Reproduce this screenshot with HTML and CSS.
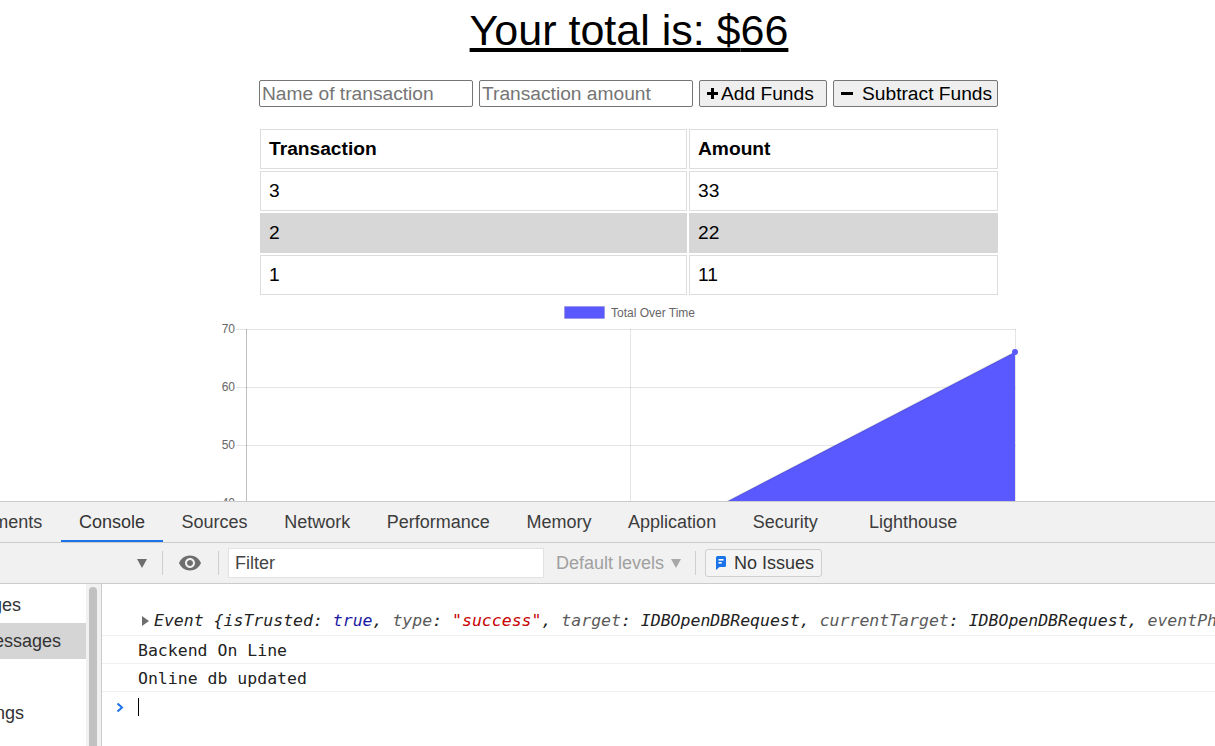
FILE: index.html
```html
<!DOCTYPE html>
<html lang="en">
<head>
<meta charset="utf-8">
<title>Budget Tracker</title>
<link rel="stylesheet" href="styles.css">
</head>
<body>
<div class="app">
  <main class="page">
    <h1 class="total">Your total is: $<span class="amount">66</span></h1>
    <form class="form">
      <input class="field" type="text" placeholder="Name of transaction">
      <input class="field" type="text" placeholder="Transaction amount">
      <button type="button" class="btn btn-add"><svg class="ico-plus" viewBox="0 0 11 11" width="11" height="11"><rect x="4" y="0" width="3" height="11"/><rect x="0" y="4" width="11" height="3"/></svg>Add Funds</button>
      <button type="button" class="btn btn-sub"><svg class="ico-minus" viewBox="0 0 12 3" width="12" height="3"><rect x="0" y="0" width="12" height="3"/></svg>Subtract Funds</button>
    </form>
    <table class="tx">
      <thead>
        <tr><th>Transaction</th><th>Amount</th></tr>
      </thead>
      <tbody>
        <tr><td>3</td><td>33</td></tr>
        <tr class="alt"><td>2</td><td>22</td></tr>
        <tr><td>1</td><td>11</td></tr>
      </tbody>
    </table>
    <svg class="chart" width="1215" height="204" viewBox="0 297 1215 204">
      <g stroke="rgba(0,0,0,0.1)" stroke-width="1">
        <line x1="236" y1="329.5" x2="1016" y2="329.5"/>
        <line x1="236" y1="387.5" x2="1016" y2="387.5"/>
        <line x1="236" y1="445.5" x2="1016" y2="445.5"/>
        <line x1="236" y1="503.5" x2="1016" y2="503.5"/>
        <line x1="630.5" y1="329" x2="630.5" y2="510"/>
        <line x1="1015.5" y1="329" x2="1015.5" y2="510"/>
      </g>
      <line x1="246.5" y1="329" x2="246.5" y2="510" stroke="rgba(0,0,0,0.25)" stroke-width="1"/>
      <polygon points="710.7,510 1015,352 1015,510" fill="#5959ff"/>
      <line x1="710.7" y1="510" x2="1015" y2="352" stroke="rgba(0,0,0,0.12)" stroke-width="1.5"/>
      <circle cx="1015" cy="352" r="3" fill="#5959ff"/>
      <rect x="564.5" y="306.5" width="40" height="12" fill="#5959ff" stroke="rgba(0,0,0,0.1)"/>
      <text class="chart-label" x="611" y="317">Total Over Time</text>
      <text class="chart-label" x="235" y="333" text-anchor="end">70</text>
      <text class="chart-label" x="235" y="391" text-anchor="end">60</text>
      <text class="chart-label" x="235" y="449" text-anchor="end">50</text>
      <text class="chart-label" x="235" y="507" text-anchor="end">40</text>
    </svg>
  </main>

  <section class="devtools">
    <nav class="tabbar">
      <div class="tabs">
        <span class="tab">Elements</span>
        <span class="tab active">Console</span>
        <span class="tab">Sources</span>
        <span class="tab">Network</span>
        <span class="tab">Performance</span>
        <span class="tab">Memory</span>
        <span class="tab">Application</span>
        <span class="tab">Security</span>
        <span class="tab tab-lh">Lighthouse</span>
      </div>
    </nav>
    <div class="toolbar">
      <svg class="ctx-arrow" viewBox="0 0 10 9" width="10" height="9"><polygon points="0,0 10,0 5,9"/></svg>
      <span class="sep sep-1"></span>
      <svg class="eye" viewBox="0 0 24 24" width="24" height="24"><path d="M12 4.5C7 4.5 2.730 7.61 1 12c1.73 4.39 6 7.5 11 7.5s9.27-3.11 11-7.5c-1.73-4.39-6-7.5-11-7.5zM12 17c-2.76 0-5-2.24-5-5s2.24-5 5-5 5 2.24 5 5-2.24 5-5 5zm0-8c-1.66 0-3 1.34-3 3s1.34 3 3 3 3-1.34 3-3-1.34-3-3-3z"/></svg>
      <span class="sep sep-2"></span>
      <div class="filter">Filter</div>
      <span class="levels">Default levels<svg class="lv-arrow" viewBox="0 0 10 9" width="10" height="9"><polygon points="0,0 10,0 5,9"/></svg></span>
      <span class="sep sep-3"></span>
      <span class="issues"><svg class="issue-ico" viewBox="0 0 10 14" width="10" height="14"><path d="M1.5 0h7A1.5 1.5 0 0 1 10 1.5v8A1.5 1.5 0 0 1 8.5 11H3.5L0 14V1.5A1.5 1.5 0 0 1 1.5 0z" fill="#1a73e8"/><rect x="2.5" y="3" width="5" height="1.6" fill="#fff"/><rect x="2.5" y="6" width="3.2" height="1.6" fill="#fff"/></svg>No Issues</span>
    </div>
    <div class="console">
      <ul class="sidebar">
        <li>3 messages</li>
        <li class="sel">3 user messages</li>
        <li>No errors</li>
        <li>No warnings</li>
        <li>No info</li>
      </ul>
      <div class="scroll"><span class="thumb"></span></div>
      <div class="messages">
        <div class="msg msg-event"><svg class="disclosure" viewBox="0 0 7 10" width="7" height="10"><polygon points="0,0 7,5 0,10"/></svg>Event {isTrusted: <span class="bool">true</span>, <span class="key">type</span>: <span class="str">"success"</span>, <span class="key">target</span>: IDBOpenDBRequest, <span class="key">currentTarget</span>: IDBOpenDBRequest, <span class="key">eventPhase</span>: 2, …}</div>
        <div class="msg">Backend On Line</div>
        <div class="msg">Online db updated</div>
        <div class="prompt"><svg class="chevron" viewBox="0 0 8 11" width="8" height="11"><polyline points="1.5,1.5 6,5.5 1.5,9.5"/></svg><span class="caret"></span></div>
      </div>
    </div>
  </section>
</div>
</body>
</html>
```

FILE: styles.css
```css
* { box-sizing: border-box; }

html, body {
  margin: 0;
  height: 100%;
}

body {
  overflow: hidden;
  background: #fff;
  color: #000;
  font-family: "Liberation Sans", Arial, sans-serif;
}

.app {
  display: flex;
  flex-direction: column;
  height: 746px;
}

/* ---------- page ---------- */
.page {
  flex: none;
  height: 501px;
  overflow: hidden;
  padding-left: 43px;
}

.total {
  margin: 0;
  padding-top: 5px;
  font-size: 43px;
  line-height: 50px;
  font-weight: normal;
  text-align: center;
  text-decoration: underline;
}

.form {
  display: flex;
  justify-content: center;
  gap: 6px;
  margin: 25px 0 0 -1px;
}

.field {
  width: 214px;
  height: 27px;
  margin: 0;
  padding: 1px 2px;
  border: 1px solid #767676;
  border-radius: 2px;
  background: #fff;
  color: #000;
  font: 19.2px "Liberation Sans", Arial, sans-serif;
}

.field::placeholder { color: #757575; }

.btn {
  height: 27px;
  margin: 0;
  padding: 0 0 0 7px;
  display: flex;
  align-items: center;
  border: 1px solid #767676;
  border-radius: 2px;
  background: #efefef;
  color: #000;
  font: 19.2px "Liberation Sans", Arial, sans-serif;
  white-space: nowrap;
}

.btn-add { width: 128px; }
.btn-sub { width: 165px; }

.ico-plus { margin-right: 3px; fill: #000; flex: none; }
.ico-minus { margin-right: 9px; fill: #000; flex: none; }

.tx {
  width: 742px;
  margin: 20px auto 0;
  border-spacing: 2px;
  table-layout: fixed;
  font-size: 19.2px;
}

.tx th,
.tx td {
  border: 1px solid #ddd;
  padding: 8px;
  line-height: 22px;
  text-align: left;
}

.tx th:first-child { width: 427px; }
.tx th { font-weight: bold; }

.tx .alt td {
  background: #d7d7d7;
  border-color: #d7d7d7;
}

.chart {
  display: block;
  margin-left: -43px;
}

.chart-label {
  font-family: "Liberation Sans", Arial, sans-serif;
  font-size: 12px;
  fill: #666;
}

/* ---------- devtools ---------- */
.devtools {
  flex: 1;
  min-height: 0;
  display: flex;
  flex-direction: column;
  border-top: 1px solid #cbcbcb;
  background: #fff;
  color: #333;
  font-family: "Liberation Sans", Arial, sans-serif;
  font-size: 18px;
}

.tabbar {
  flex: none;
  height: 41px;
  background: #f1f1f1;
  border-bottom: 1px solid #cbcbcb;
  overflow: hidden;
}

.tabs {
  display: flex;
  height: 40px;
  margin-left: -51px;
}

.tab {
  padding: 0 18.3px;
  line-height: 40px;
  white-space: nowrap;
  color: #3c3c3c;
}

.tab.active {
  color: #333;
  box-shadow: inset 0 -2px 0 #1a73e8;
}

.tab-lh { padding-left: 33px; }

.toolbar {
  flex: none;
  height: 41px;
  display: flex;
  align-items: center;
  background: #f1f1f1;
  border-bottom: 1px solid #cbcbcb;
}

.ctx-arrow {
  margin-left: 137px;
  fill: #6e6e6e;
  flex: none;
}

.sep {
  flex: none;
  width: 1px;
  height: 24px;
  background: #cfcfcf;
}

.sep-1 { margin-left: 15px; }
.sep-2 { margin-left: 16px; }
.sep-3 { margin-left: 14px; }

.eye {
  margin-left: 15px;
  fill: #6e6e6e;
  flex: none;
}

.filter {
  flex: none;
  margin-left: 9px;
  width: 316px;
  height: 30px;
  padding-left: 6px;
  line-height: 28px;
  background: #fff;
  border: 1px solid #e2e2e2;
  color: #444;
}

.levels {
  margin-left: 12px;
  display: flex;
  align-items: center;
  color: #a0a0a0;
  white-space: nowrap;
}

.lv-arrow {
  margin-left: 7px;
  fill: #a8a8a8;
}

.issues {
  margin-left: 9px;
  width: 117px;
  height: 28px;
  display: flex;
  align-items: center;
  gap: 8px;
  padding-left: 10px;
  border: 1px solid #cfcfcf;
  border-radius: 3px;
  background: #f4f4f4;
  color: #333;
  white-space: nowrap;
}

.issue-ico { flex: none; }

.console {
  flex: 1;
  min-height: 0;
  display: flex;
}

.sidebar {
  flex: none;
  width: 86px;
  margin: 0;
  padding: 3px 0 0;
  list-style: none;
  overflow: hidden;
  background: #fff;
}

.sidebar li {
  height: 36px;
  line-height: 36px;
  white-space: nowrap;
  text-indent: -76px;
  color: #333;
}

.sidebar .sel { background: #d5d5d5; }

.scroll {
  flex: none;
  width: 16px;
  padding: 3px 0 0 3px;
  background: #f1f1f1;
  border-right: 1px solid #cbcbcb;
}

.thumb {
  display: block;
  width: 8px;
  height: 170px;
  border-radius: 4px;
  background: #c1c1c1;
}

.messages {
  flex: 1;
  min-width: 0;
  overflow: hidden;
  font-family: "DejaVu Sans Mono", monospace;
  font-size: 16.5px;
  color: #222;
}

.msg {
  padding-left: 36px;
  padding-top: 2px;
  line-height: 25px;
  border-bottom: 1px solid #f0f0f0;
  white-space: nowrap;
  overflow: hidden;
}

.msg-event {
  padding-top: 23px;
  padding-left: 40px;
  line-height: 28px;
  font-style: italic;
}

.disclosure {
  fill: #6e6e6e;
  margin-right: 5px;
  vertical-align: 0;
}

.key { color: #5a5a5a; }
.bool { color: #1a1aa6; }
.str { color: #c80000; }

.prompt {
  display: flex;
  align-items: center;
  height: 30px;
  padding-left: 14px;
}

.chevron {
  fill: none;
  stroke: #1a73e8;
  stroke-width: 2;
  flex: none;
}

.caret {
  width: 1px;
  height: 18px;
  margin-left: 14px;
  background: #000;
}
```
